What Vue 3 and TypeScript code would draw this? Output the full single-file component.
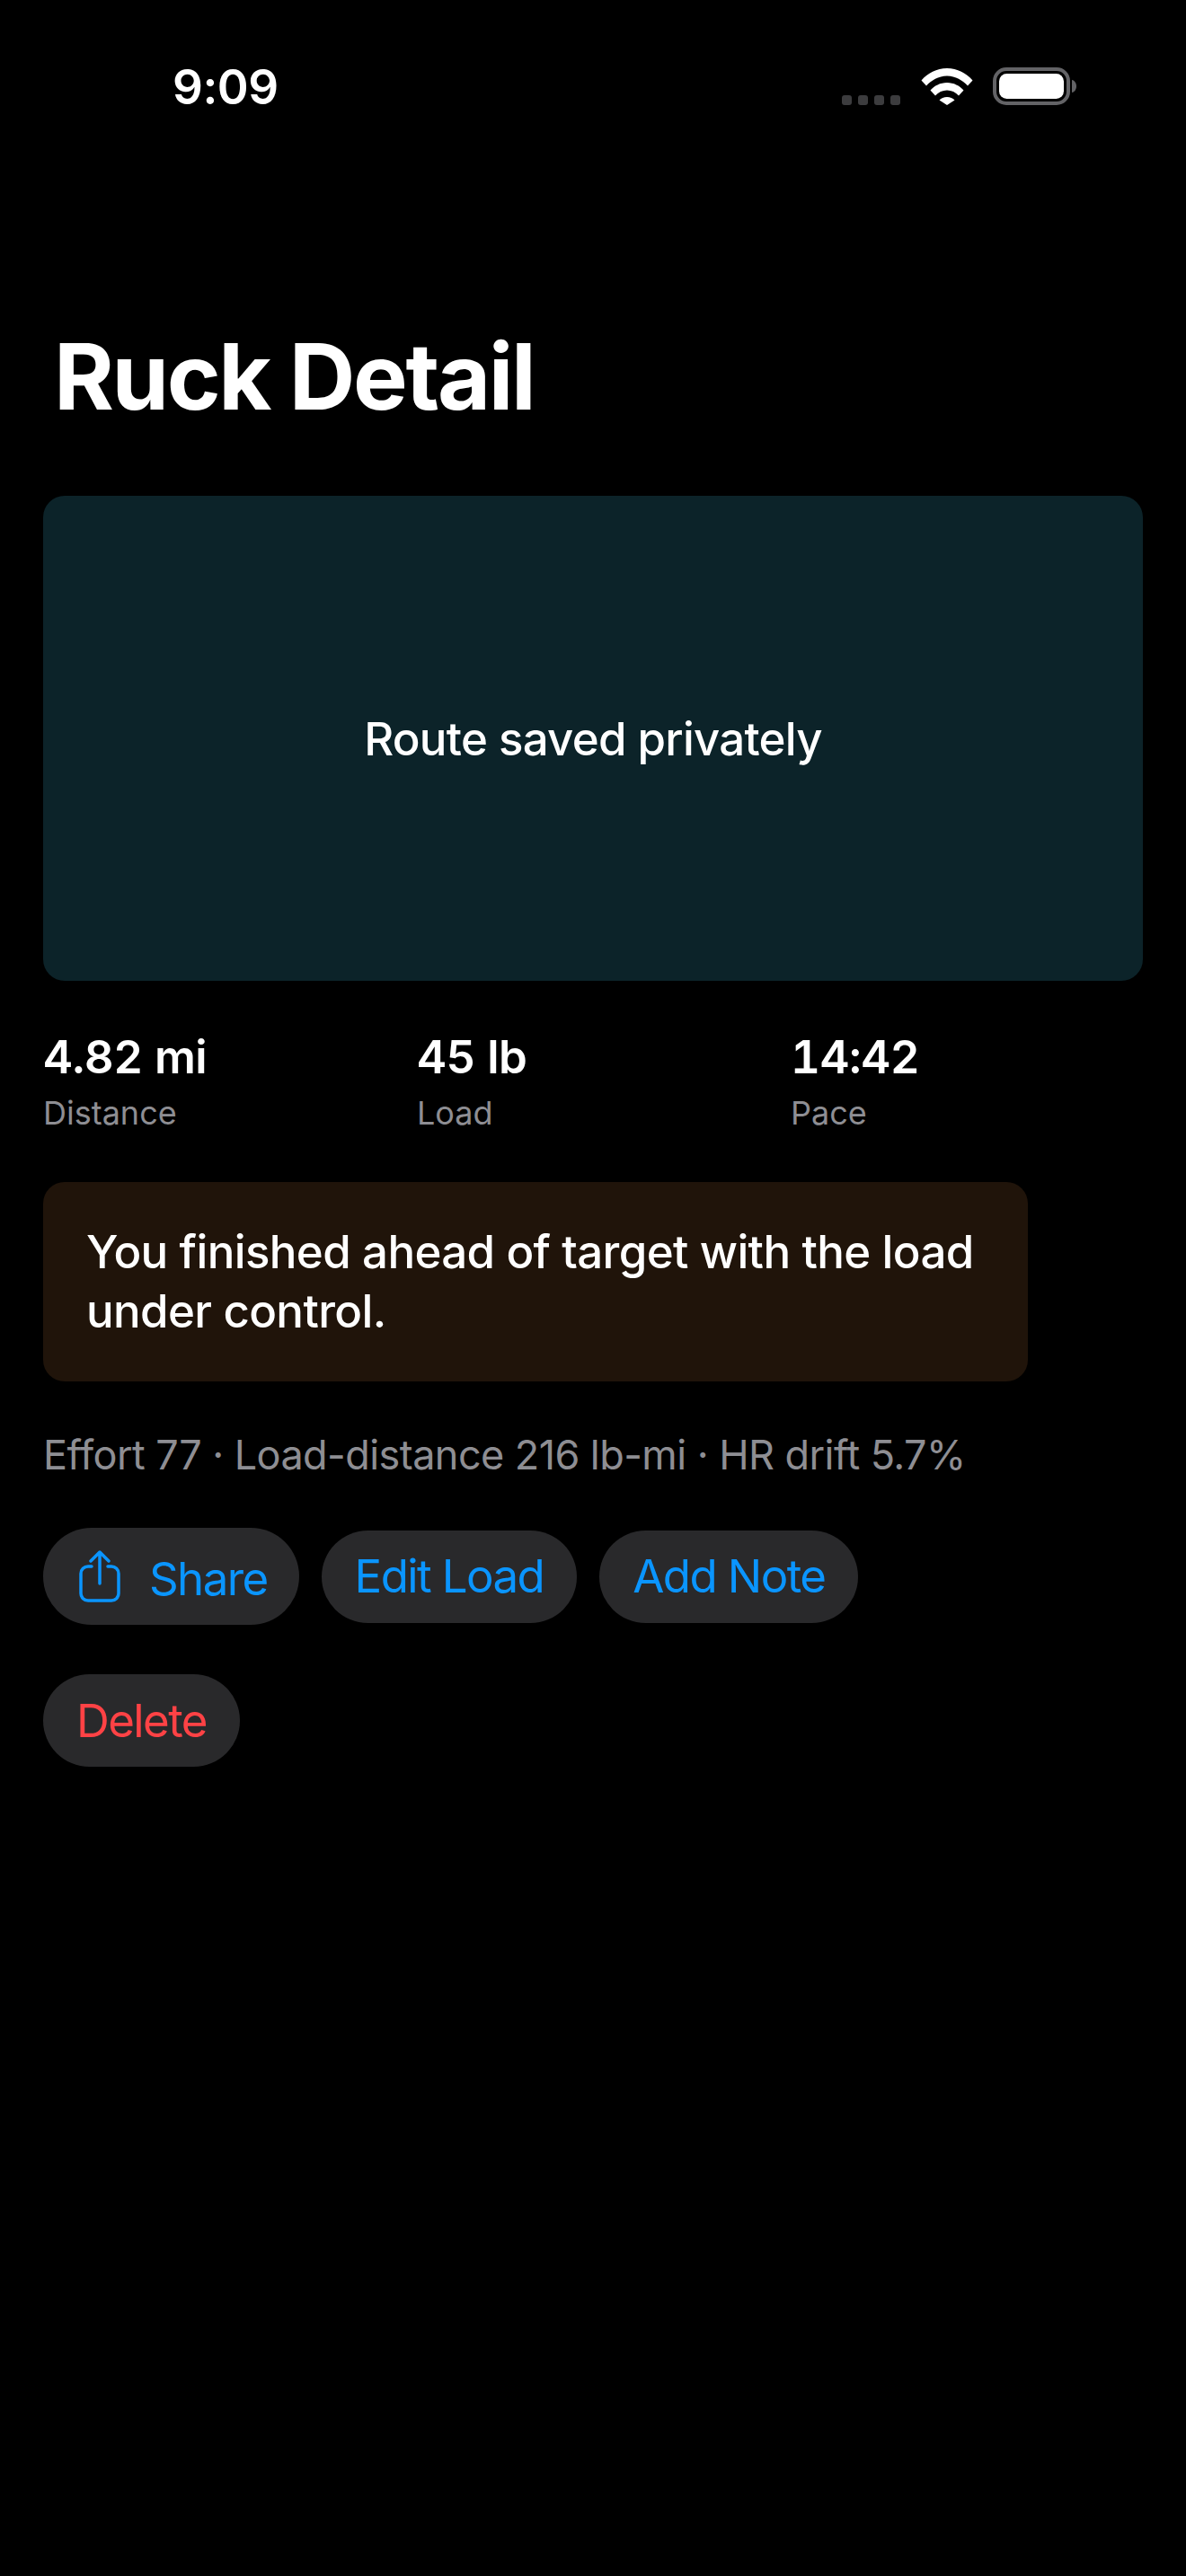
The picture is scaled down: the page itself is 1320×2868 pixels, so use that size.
<script setup lang="ts">
const stats = [
  { value: '4.82 mi', label: 'Distance' },
  { value: '45 lb', label: 'Load' },
  { value: '14:42', label: 'Pace' },
]
const actions = ['Edit Load', 'Add Note']
</script>

<template>
  <div class="screen">
    <header class="status">
      <span class="time">9:09</span>
      <div class="status-right">
        <div class="dots"><i></i><i></i><i></i><i></i></div>
        <svg class="wifi" width="58" height="42" viewBox="0 0 58 42">
          <path d="M0.5 14.5C7.5 6.5 17.5 1 29 1s21.500 5.500 28.500 13.500l-5.500 6C46.500 14.500 38.500 9.500 29 9.500S11.500 14.500 6 20.500z" fill="#fff" />
          <path d="M10.500 25.500C15 20.500 21.500 17 29 17s14 3.500 18.500 8.500l-5.500 6C38.500 27.500 34 25.500 29 25.500s-9.500 2-13 6z" fill="#fff" />
          <path d="M20.500 36.500C22.500 34.500 25.500 33 29 33s6.500 1.500 8.500 3.500L29 42z" fill="#fff" />
        </svg>
        <svg class="battery" width="93" height="42" viewBox="0 0 93 42">
          <rect x="2" y="2" width="82" height="38" rx="13" fill="none" stroke="#636366" stroke-width="4" />
          <rect x="7" y="7" width="72" height="28" rx="8.500" fill="#fff" />
          <path d="M88 14c3 .5 5 3.500 5 7s-2 6.500-5 7z" fill="#636366" />
        </svg>
      </div>
    </header>

    <h1 class="title">Ruck Detail</h1>

    <section class="route">Route saved privately</section>

    <div class="stats">
      <div v-for="s in stats" :key="s.label" class="stat">
        <div class="stat-value">{{ s.value }}</div>
        <div class="stat-label">{{ s.label }}</div>
      </div>
    </div>

    <div class="note">You finished ahead of target with the load under control.</div>

    <p class="meta">Effort 77 · Load-distance 216 lb-mi · HR drift 5.7%</p>

    <div class="actions">
      <button class="btn share">
        <svg width="46" height="58" viewBox="0 0 46 58" fill="none" stroke="#0a95ff" stroke-width="3.500" stroke-linecap="round" stroke-linejoin="round">
          <path d="M14 18H10a8 8 0 0 0-8 8v22a8 8 0 0 0 8 8h26a8 8 0 0 0 8-8V26a8 8 0 0 0-8-8h-4" />
          <path d="M23 37V3M13 12l10-10 10 10" />
        </svg>
        <span class="share-text">Share</span>
      </button>
      <button v-for="a in actions" :key="a" class="btn">{{ a }}</button>
      <button class="btn danger">Delete</button>
    </div>
  </div>
</template>

<style scoped>
.screen {
  width: 1320px;
  height: 2868px;
  background: #000;
  color: #fff;
  font-family: Inter, "Noto Sans", sans-serif;
  padding: 0 48px;
  box-sizing: border-box;
  overflow: hidden;
}

.status {
  display: flex;
  justify-content: space-between;
  align-items: flex-start;
  height: 75px;
  padding-top: 65px;
  margin: 0 -48px;
  padding-left: 192px;
  padding-right: 122px;
}

.time {
  font-size: 53px;
  font-weight: 600;
  line-height: 64px;
  letter-spacing: -0.5px;
}

.status-right {
  display: flex;
  align-items: flex-start;
  margin-top: 10px;
}

.dots {
  display: flex;
  gap: 7px;
  margin-top: 31px;
  margin-right: 23px;
}

.dots i {
  width: 11px;
  height: 11px;
  border-radius: 3px;
  background: #3c3c3e;
}

.wifi {
  margin-right: 22px;
}

.title {
  margin: 0 0 0 12px;
  padding-top: 216px;
  font-size: 102px;
  font-weight: 700;
  line-height: 127px;
  letter-spacing: -2.4px;
}

.route {
  margin-top: 69px;
  height: 540px;
  border-radius: 24px;
  background: #0c2329;
  display: flex;
  align-items: center;
  justify-content: center;
  font-size: 51px;
  font-weight: 500;
  letter-spacing: -0.75px;
}

.stats {
  display: grid;
  grid-template-columns: repeat(3, 1fr);
  column-gap: 24px;
  margin-top: 54px;
}

.stat-value {
  font-size: 51px;
  font-weight: 600;
  line-height: 62px;
  letter-spacing: -0.5px;
  font-variant-numeric: tabular-nums;
}

.stat-label {
  margin-top: 8px;
  font-size: 36px;
  line-height: 47px;
  color: #8e8e93;
}

.note {
  margin-top: 53px;
  width: 1096px;
  box-sizing: border-box;
  padding: 45px 48px;
  border-radius: 24px;
  background: #20140a;
  font-size: 51px;
  font-weight: 500;
  line-height: 66px;
  letter-spacing: -0.63px;
}

.meta {
  margin: 55px 0 0;
  font-size: 45px;
  line-height: 54px;
  color: #8e8e93;
  letter-spacing: -0.56px;
}

.actions {
  display: flex;
  flex-wrap: wrap;
  align-items: center;
  column-gap: 25px;
  row-gap: 55px;
  margin-top: 54px;
  width: 1096px;
}

.btn {
  height: 103px;
  padding: 0 37px;
  border: none;
  border-radius: 52px;
  background: #29292b;
  color: #0a95ff;
  font-family: inherit;
  font-size: 51px;
  line-height: 62px;
  letter-spacing: -1.6px;
}

.share {
  height: 108px;
  display: flex;
  align-items: center;
  gap: 32px;
  padding: 0 35px 0 40px;
  border-radius: 54px;
}

.share-text {
  position: relative;
  top: 3px;
}

.danger {
  color: #ff4245;
}
</style>
